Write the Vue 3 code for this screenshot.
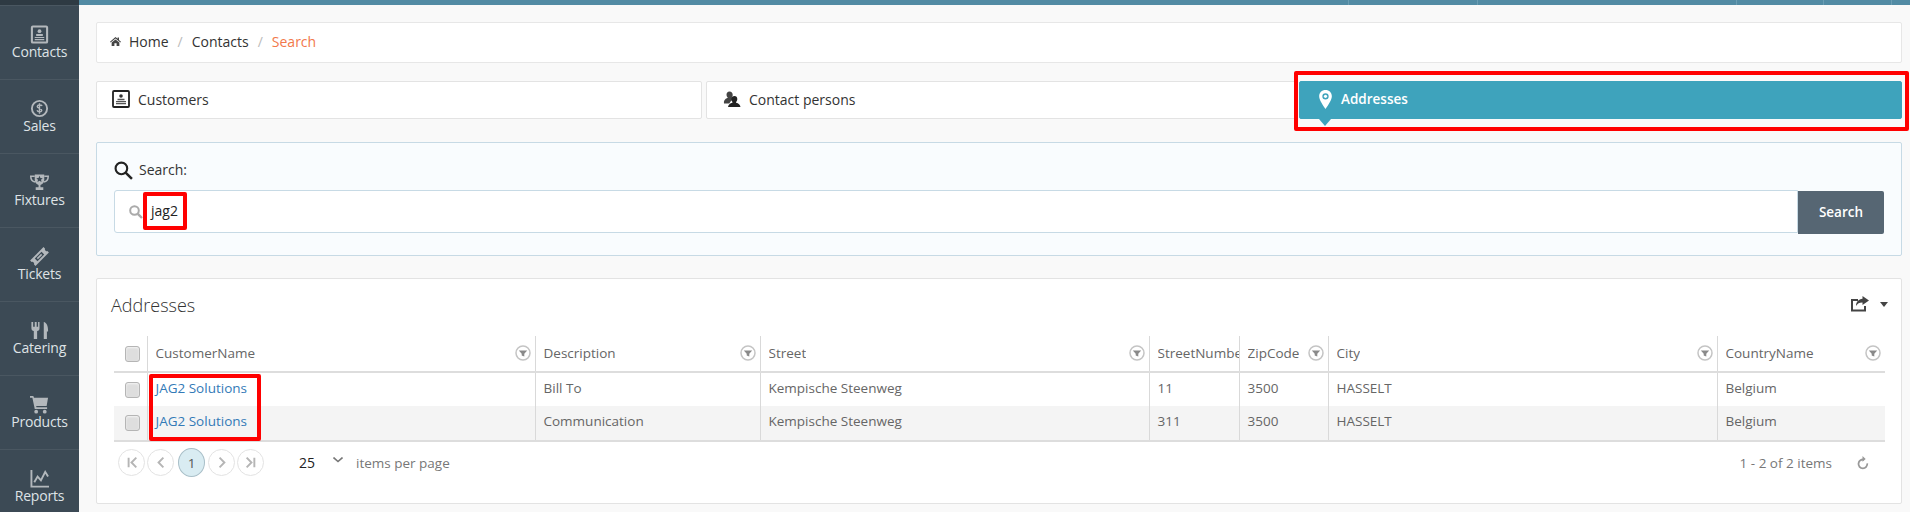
<script setup>
const navItems = [
  { label: 'Contacts', icon: 'contacts' },
  { label: 'Sales', icon: 'sales' },
  { label: 'Fixtures', icon: 'fixtures' },
  { label: 'Tickets', icon: 'tickets' },
  { label: 'Catering', icon: 'catering' },
  { label: 'Products', icon: 'products' },
  { label: 'Reports', icon: 'reports' }
]
const columns = [
  { key: 'c', title: 'CustomerName', width: 388, filter: true },
  { key: 'd', title: 'Description', width: 225, filter: true },
  { key: 's', title: 'Street', width: 389, filter: true },
  { key: 'n', title: 'StreetNumber', width: 90, filter: false },
  { key: 'z', title: 'ZipCode', width: 89, filter: true },
  { key: 'y', title: 'City', width: 389, filter: true },
  { key: 'r', title: 'CountryName', width: 168, filter: true }
]
const rows = [
  { c: 'JAG2 Solutions', d: 'Bill To', s: 'Kempische Steenweg', n: '11', z: '3500', y: 'HASSELT', r: 'Belgium' },
  { c: 'JAG2 Solutions', d: 'Communication', s: 'Kempische Steenweg', n: '311', z: '3500', y: 'HASSELT', r: 'Belgium' }
]
const pagers = [
  { id: 'first', d: 'M10 8v10M18 8l-5 5 5 5' },
  { id: 'prev', d: 'M16 8l-5 5 5 5' },
  { id: 'page', text: '1' },
  { id: 'next', d: 'M11 8l5 5-5 5' },
  { id: 'last', d: 'M9 8l5 5-5 5M17 8v10' }
]
</script>

<template>
  <div class="app">
    <aside class="sidebar">
      <div class="side-top"></div>
      <a v-for="item in navItems" :key="item.label" class="nav-item">
        <svg class="nav-icon" viewBox="0 0 20 20">
          <template v-if="item.icon === 'contacts'">
            <rect x="2" y="1.500" width="16" height="17" rx="1" fill="none" stroke="currentColor" stroke-width="2.200" />
            <circle cx="10" cy="6.500" r="2" fill="currentColor" />
            <path d="M6.500 9.500h7v2h-7zM5 12.500h10v1.300H5zM5 14.800h10v1.300H5z" fill="currentColor" />
          </template>
          <template v-else-if="item.icon === 'sales'">
            <circle cx="10" cy="10" r="8" fill="none" stroke="currentColor" stroke-width="2" />
            <path d="M12.800 7.300C12 6 8 5.800 7.600 7.800c-.4 2.400 5 1.700 4.800 4.300-.2 2-4.200 2-5-.2M10 4.500v11" fill="none" stroke="currentColor" stroke-width="1.500" />
          </template>
          <template v-else-if="item.icon === 'fixtures'">
            <path d="M5 1.500h10V7c0 3-2 5-4 5.500V15h3v3H6v-3h3v-2.500C7 12 5 10 5 7z" fill="currentColor" />
            <path d="M5 3.500H.8c0 3.500 1.700 5.500 4.700 6M15 3.500h4.200c0 3.500-1.700 5.500-4.700 6" fill="none" stroke="currentColor" stroke-width="1.600" />
            <path d="M10 3l1 2.300 2.400.2-1.800 1.600.5 2.400-2.100-1.300-2.100 1.300.5-2.400-1.800-1.600 2.400-.2z" fill="#3c4a55" />
          </template>
          <template v-else-if="item.icon === 'tickets'">
            <g transform="rotate(-45 10 10)">
              <path fill-rule="evenodd" d="M0 6h20v2.300a1.800 1.800 0 000 3.400V14H0v-2.300a1.800 1.800 0 000-3.400zM5 8v4h10V8z" fill="currentColor" />
              <rect x="6.800" y="9.200" width="6.400" height="1.600" fill="currentColor" />
            </g>
          </template>
          <template v-else-if="item.icon === 'catering'">
            <path d="M1.500 1v6.500c0 1.800 1.200 2.800 2.500 3.100V19h3.500v-8.400C9 10.300 10 9.300 10 7.500V1H8.500v5H7V1H5v5H3.300V1z" fill="currentColor" />
            <path d="M14.500 1C17.500 1.500 19 5.500 19 9.500V11h-1.200v8h-3.300z" fill="currentColor" />
          </template>
          <template v-else-if="item.icon === 'products'">
            <path d="M0 1h3.500l.7 2H19l-1.500 8.500H6.500l.3 1.500H18v1.800H5L2.500 2.800H0z" fill="currentColor" />
            <circle cx="6.500" cy="17.500" r="2" fill="currentColor" />
            <circle cx="15.500" cy="17.500" r="2" fill="currentColor" />
          </template>
          <template v-else>
            <path d="M1.500 1v17.500H20" fill="none" stroke="currentColor" stroke-width="2" />
            <path d="M4.500 14l3.500-6 3.500 4 4.500-9 3 5" fill="none" stroke="currentColor" stroke-width="2" />
          </template>
        </svg>
        <span>{{ item.label }}</span>
      </a>
    </aside>

    <div class="page">
      <div class="topbar">
        <i></i><i></i><i></i><i></i><i></i>
      </div>
      <main class="content">
        <nav class="breadcrumb">
          <svg class="home" viewBox="0 0 12 12"><path d="M6 1L0 6.300l.7.700L6 2.600 11.300 7l.7-.7L9.800 4.400V1.500H8.300V3zM1.800 7.200V11h3V8h2.400v3h3V7.200L6 3.700z" fill="#444" /></svg>
          <span class="crumb">Home</span>
          <span class="slash">/</span>
          <span class="crumb">Contacts</span>
          <span class="slash">/</span>
          <span class="current">Search</span>
        </nav>

        <div class="tabs">
          <div class="tab tab-a">
            <svg class="tab-icon" viewBox="0 0 18 18">
              <rect x="1" y="1" width="16" height="16" rx="1" fill="#fff" stroke="#222" stroke-width="1.800" />
              <circle cx="9" cy="6" r="1.800" fill="#333" />
              <path d="M5.500 8.800h7v1.400h-7zM4 11h10v1.200H4zM4 13h10v1.200H4z" fill="#555" />
            </svg>
            <span>Customers</span>
          </div>
          <div class="tab tab-b">
            <svg class="tab-icon" viewBox="0 0 18 18">
              <path d="M6.500 1.500c2 0 3.200 1.300 3.200 3.200 0 1.200-.4 2.300-1 3 1.100.4 1.800.9 2.300 1.500-1.800.6-3.800 2-4.600 4.300H1c-.5-2.300.5-4.600 3.800-5.800-.7-.8-1.300-1.800-1.300-3 0-1.900 1.100-3.200 3-3.200z" fill="#444" />
              <path d="M11.500 6c1.700 0 2.800 1.200 2.800 3 0 1.200-.6 2.300-1.200 3v.8c2.400.6 4.100 1.900 4.400 4.200H5c.3-2.300 2-3.600 4.400-4.200V12c-.6-.7-1-1.800-1-3 0-1.800 1.400-3 3.100-3z" fill="#222" />
            </svg>
            <span>Contact persons</span>
          </div>
          <div class="tab tab-c active">
            <svg class="pin" viewBox="0 0 12 18">
              <path fill-rule="evenodd" d="M6 0c3.500 0 6 2.500 6 6 0 3.500-3.500 8.500-6 12C3.500 14.500 0 9.500 0 6c0-3.500 2.500-6 6-6zm0 3a3 3 0 100 6 3 3 0 000-6z" fill="#fff" />
              <circle cx="6" cy="6" r="1.500" fill="#fff" />
            </svg>
            <span>Addresses</span>
            <b class="tab-arrow"></b>
            <b class="mark mark-tab"></b>
          </div>
        </div>

        <section class="search-panel">
          <label class="search-label">
            <svg class="search-big" viewBox="0 0 18 18">
              <circle cx="7" cy="7" r="5.500" fill="none" stroke="#222" stroke-width="2" />
              <path d="M11 11l6 6" stroke="#222" stroke-width="2.400" />
            </svg>
            <span>Search:</span>
          </label>
          <div class="search-row">
            <div class="search-input">
              <svg class="search-small" viewBox="0 0 14 14">
                <circle cx="5.500" cy="5.500" r="4.300" fill="none" stroke="#aaa" stroke-width="2" />
                <path d="M8.800 8.800l4.200 4.200" stroke="#aaa" stroke-width="2.400" />
              </svg>
              <span class="query">jag2</span>
              <b class="mark mark-query"></b>
            </div>
            <button class="search-btn">Search</button>
          </div>
        </section>

        <section class="grid-panel">
          <header class="grid-head">
            <h2>Addresses</h2>
            <div class="export">
              <svg class="share" viewBox="0 0 18 16">
                <path d="M7 4H1v10.500h13V10" fill="none" stroke="#444" stroke-width="2" />
                <path d="M11.500 0L18 4.500 11.500 9V6.500C8.500 6.400 6.500 7.500 5 10c0-4 2.500-6.800 6.500-7.200z" fill="#444" />
              </svg>
              <b class="caret"></b>
            </div>
          </header>

          <div class="table-wrap">
            <table>
              <colgroup>
                <col class="check-col" />
                <col v-for="col in columns" :key="col.key" :style="{ width: col.width + 'px' }" />
              </colgroup>
              <thead>
                <tr>
                  <th class="check"><i class="box"></i></th>
                  <th v-for="col in columns" :key="col.key">
                    <div class="th-inner" :class="{ plain: !col.filter }">
                      <span class="th-title">{{ col.title }}</span>
                      <svg v-if="col.filter" class="filter" viewBox="0 0 16 16">
                        <circle cx="8" cy="8" r="7" fill="#fff" stroke="#c4c4c4" stroke-width="1.500" />
                        <path d="M3.800 5.500h8.400L9.300 8.700V11.500L6.700 10.500V8.700z" fill="#8a8a8a" />
                      </svg>
                    </div>
                  </th>
                </tr>
              </thead>
              <tbody>
                <tr v-for="(row, i) in rows" :key="i" :class="{ alt: i === 1 }">
                  <td class="check"><i class="box"></i></td>
                  <td v-for="col in columns" :key="col.key">
                    <a v-if="col.key === 'c'" class="link">{{ row[col.key] }}</a>
                    <template v-else>{{ row[col.key] }}</template>
                  </td>
                </tr>
              </tbody>
            </table>
            <b class="mark mark-names"></b>
          </div>

          <footer class="pager">
            <div class="pages">
              <span v-for="p in pagers" :key="p.id" class="page-btn" :class="{ on: p.text }">
                <template v-if="p.text">{{ p.text }}</template>
                <svg v-else viewBox="0 0 26 26"><path :d="p.d" fill="none" stroke="#b5b5b5" stroke-width="2" /></svg>
              </span>
            </div>
            <div class="size">
              <span class="size-value">25</span>
              <svg class="chev" viewBox="0 0 10 6"><path d="M.5.500L5 4.500 9.500.500" fill="none" stroke="#777" stroke-width="1.600" /></svg>
            </div>
            <span class="per-page">items per page</span>
            <span class="count">1 - 2 of 2 items</span>
            <svg class="refresh" viewBox="0 0 12 14">
              <path d="M9.800 6A4.400 4.400 0 115.500 3.600" fill="none" stroke="#999" stroke-width="1.800" transform="rotate(20 6 8)" />
              <path d="M5.500 0l3.200 3-3.200 2.800z" fill="#999" />
            </svg>
          </footer>
        </section>
      </main>
    </div>
  </div>
</template>

<style>
html, body { margin: 0; padding: 0; overflow: hidden; background: #f9f9f9; }
</style>

<style scoped>
.app {
  display: flex;
  width: 1910px;
  height: 512px;
  overflow: hidden;
  font-family: "Open Sans", "Noto Sans", sans-serif;
  font-size: 13px;
  color: #333;
  background: #f9f9f9;
}
.sidebar { flex: 0 0 79px; background: #3c4a55; overflow: hidden; }
.side-top { height: 6px; background: #2e3a43; border-bottom: 1px solid #4a5761; box-sizing: border-box; }
.nav-item {
  height: 74px;
  box-sizing: border-box;
  padding-top: 19px;
  display: flex;
  flex-direction: column;
  align-items: center;
  color: #dfe3e6;
  font-size: 14px;
  line-height: 16px;
  border-bottom: 1px solid #4a5761;
  letter-spacing: -.2px;
}
.nav-icon { width: 19px; height: 19px; color: #b3b8bc; margin-bottom: 0; }

.page { flex: 1; min-width: 0; display: flex; flex-direction: column; }
.topbar { height: 5px; background: #528ba4; position: relative; flex: none; display: flex; justify-content: flex-end; padding-right: 18px; }
.topbar i { width: 1px; background: #6b9db3; margin-left: 67px; }
.topbar i:nth-child(1) { margin-right: 61px; }
.topbar i:nth-child(2) { margin-right: 191px; }
.topbar i:nth-child(3) { margin-right: 19px; }

.content { padding: 17px 8px 0 17px; display: flex; flex-direction: column; }

.breadcrumb {
  height: 41px;
  box-sizing: border-box;
  background: #fff;
  border: 1px solid #e7e7e7;
  border-radius: 2px;
  display: flex;
  align-items: center;
  padding: 0 0 2px 13px;
  font-size: 14px;
}
.home { width: 11px; height: 11px; margin-right: 8px; }
.crumb { color: #333; }
.slash { color: #bbb; margin: 0 9px; }
.current { color: #f2784b; }

.tabs { display: flex; margin-top: 18px; }
.tab {
  position: relative;
  height: 38px;
  box-sizing: border-box;
  background: #fff;
  border: 1px solid #e3e3e3;
  border-radius: 2px;
  display: flex;
  align-items: center;
  padding: 0 0 2px 15px;
  color: #333;
  font-size: 14px;
}
.tab-a { flex: 0 0 606px; }
.tab-b { flex: 0 0 590px; margin-left: 4px; padding-left: 16px; }
.tab-c { flex: 0 0 603px; margin-left: 3px; }
.tab-icon { width: 18px; height: 18px; margin-right: 8px; flex: none; }
.tab.active {
  background: #3ea3bc;
  border-color: #3ea3bc;
  color: #fff;
  font-weight: 600;
  padding-left: 19px;
  font-size: 13.500px;
}
.pin { width: 13px; height: 19px; margin-right: 9px; }
.tab-arrow {
  position: absolute;
  left: 19px;
  bottom: -8px;
  border: 6px solid transparent;
  border-bottom: 0;
  border-top: 7px solid #3ea3bc;
}
.mark { position: absolute; border: 4px solid #f00; border-radius: 2px; box-sizing: border-box; pointer-events: none; }
.mark-tab { left: -6px; top: -11px; width: 615px; height: 60px; }

.search-panel {
  margin-top: 23px;
  height: 114px;
  box-sizing: border-box;
  background: #f9fcfe;
  border: 1px solid #c7dae5;
  border-radius: 2px;
  padding: 16px 17px 0;
}
.search-label { display: flex; align-items: center; height: 20px; font-size: 14px; color: #333; }
.search-big { width: 19px; height: 19px; margin: 2px 6px 0 0; }
.search-row { display: flex; align-items: flex-start; margin-top: 11px; }
.search-input {
  position: relative;
  flex: 1;
  height: 43px;
  box-sizing: border-box;
  background: #fff;
  border: 1px solid #c7dae5;
  border-radius: 3px 0 0 3px;
  display: flex;
  align-items: center;
  padding-left: 14px;
}
.search-small { width: 14px; height: 14px; margin-right: 8px; }
.query { font-size: 14px; color: #222; margin-top: -2px; }
.mark-query { left: 28px; top: 1px; width: 44px; height: 38px; }
.search-btn {
  flex: 0 0 86px;
  height: 43px;
  margin-top: 1px;
  padding: 0 0 2px;
  border: 0;
  border-radius: 0 2px 2px 0;
  background: #566673;
  color: #fff;
  font: 600 13.500px "Open Sans", sans-serif;
}

.grid-panel {
  margin-top: 22px;
  height: 226px;
  box-sizing: border-box;
  background: #fff;
  border: 1px solid #e3e3e3;
  border-radius: 2px;
  padding: 0 17px;
}
.grid-head { height: 57px; display: flex; justify-content: space-between; align-items: flex-start; }
h2 { margin: 14px 0 0 -3px; font-size: 18px; line-height: 24px; font-weight: 300; color: #333; }
.export { display: flex; align-items: center; margin-top: 17px; margin-right: -4px; }
.share { width: 18px; height: 16px; }
.caret { margin-left: 11px; border: 4px solid transparent; border-bottom: 0; border-top: 5px solid #444; }

.table-wrap { position: relative; }
table { width: 1771px; table-layout: fixed; border-collapse: collapse; font-size: 13.500px; color: #666; }
.check-col { width: 33px; }
th { box-sizing: border-box; height: 36px; padding: 0 0 2px; font-weight: 400; text-align: left; border-left: 1px solid #d9d9d9; border-bottom: 2px solid #ddd; }
td { box-sizing: border-box; height: 34px; padding: 0 8px 4px; border-left: 1px solid #d9d9d9; white-space: nowrap; overflow: hidden; }
tbody tr:last-child td { height: 35px; border-bottom: 2px solid #ddd; }
.alt td { background: #f4f4f4; }
th.check, td.check { border-left: 0; padding: 0; text-align: center; }
.th-inner { display: flex; align-items: center; justify-content: space-between; padding: 0 4px 0 8px; overflow: hidden; }
.th-inner.plain { padding-right: 0; justify-content: flex-start; }
.th-title { white-space: nowrap; overflow: hidden; }
.filter { width: 16px; height: 16px; flex: none; }
.box {
  display: block;
  width: 15px;
  height: 16px;
  margin: 0 0 0 11px;
  box-sizing: border-box;
  background: #dedede;
  border: 1px solid #b5b5b5;
  border-radius: 3px;
  box-shadow: inset 0 1px 2px #f5f5f5;
}
.link { color: #337ab7; }
.mark-names { left: 35px; top: 38px; width: 112px; height: 67px; }

.pager { display: flex; align-items: center; height: 35px; margin-top: 3px; font-size: 13.500px; color: #777; }
.pages { display: flex; gap: 2px; margin-left: 4px; align-items: center; }
.page-btn {
  width: 27px;
  height: 27px;
  box-sizing: border-box;
  border: 1px solid #e3e3e3;
  border-radius: 50%;
  display: flex;
  align-items: center;
  justify-content: center;
}
.page-btn svg { width: 25px; height: 25px; }
.page-btn.on { margin: 0 1px 0 2px; background: #d9ecf2; border-color: #a9bfc8; color: #555; width: 27px; height: 29px; border-radius: 50%; }
.size { display: flex; align-items: center; margin-left: 35px; width: 57px; }
.size-value { color: #222; font-size: 14px; }
.chev { width: 10px; height: 6px; margin-left: 18px; margin-top: -6px; }
.count { margin-left: auto; }
.refresh { width: 12px; height: 14px; margin: 0 15px 0 25px; }
</style>
